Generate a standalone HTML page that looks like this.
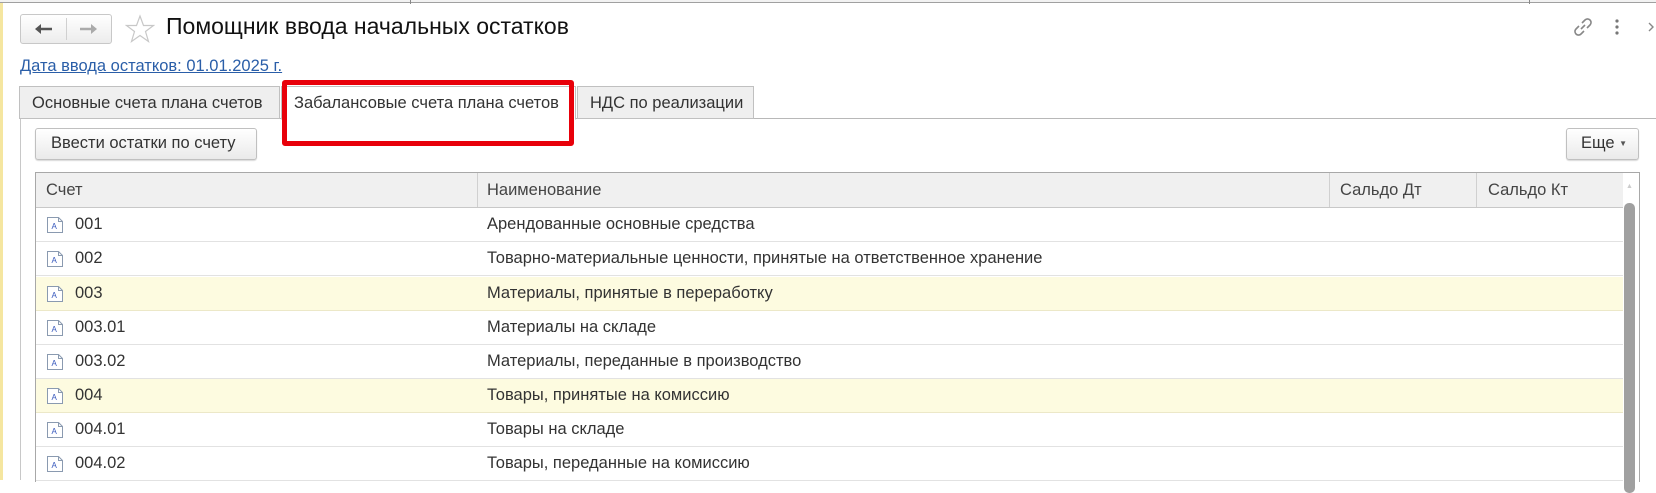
<!DOCTYPE html>
<html><head><meta charset="utf-8"><style>
*{box-sizing:border-box;margin:0;padding:0}
body{width:1656px;height:480px;overflow:hidden;background:#fff;font-family:"Liberation Sans",Arial,sans-serif;color:#333;position:relative;font-size:16.5px}
.a{position:absolute}
.topline{left:0;top:0;width:1656px;height:3px;background:#f2f2f2;border-bottom:1px solid #a0a0a0}
.ystrip{left:0;top:3px;width:3px;height:477px;background:#f5e6a0}
.nav{left:20px;top:14px;width:92px;height:30px;border:1px solid #c8c8c8;border-radius:3px;background:linear-gradient(#fff,#ececec)}
.nav .d{position:absolute;left:45px;top:3px;width:1px;height:22px;background:#d0d0d0}
.title{left:166px;top:13px;font-size:23px;color:#111}
.link{left:20px;top:57px;font-size:16.5px;color:#2a5ea8;text-decoration:underline}
.tab{top:86px;height:33px;border:1px solid #c0c0c0;background:#efefef;padding:7px 12px;font-size:16.5px;color:#333;white-space:nowrap}
.panelline{left:20px;top:118px;width:1636px;height:1px;background:#b8b8b8}
.panelv{left:20px;top:118px;width:1px;height:362px;background:#c8c8c8}
.btn{top:128px;height:32px;border:1px solid #c0c0c0;border-radius:3px;background:linear-gradient(#fff,#eaeaea);font-size:16.5px;color:#333;padding:5px 15px;box-shadow:0 1px 1px rgba(0,0,0,.15);white-space:nowrap}
.tbl{left:35px;top:172px;width:1605px;height:310px;border:1px solid #a8a8a8;border-bottom:none}
.hdr{left:0;top:0;width:1587px;height:35px;background:#f0f0f0;border-bottom:1px solid #c8c8c8}
.hc{top:0;height:34px;line-height:34px;color:#444;font-size:16.5px}
.vl{top:0;width:1px;height:34px;background:#d0d0d0}
.row{left:0;width:1587px;height:34px;border-bottom:1px solid #e2e2e2;line-height:33px}
.row.y{background:#fdfbe0;border-bottom-color:#ece8c8}
.ic{position:absolute;left:10px;top:8px}
.c1{position:absolute;left:39px}
.c2{position:absolute;left:451px}
.sb{left:1588px;top:30px;width:11px;height:290px;background:#a0a0a0;border-radius:5px}
</style></head><body>
<div class="a topline"></div>
<div class="a" style="left:410px;top:0;width:1px;height:4px;background:#888"></div>
<div class="a" style="left:1529px;top:0;width:1px;height:4px;background:#888"></div>
<div class="a ystrip"></div>
<div class="a nav"><div class="d"></div>
<svg class="a" style="left:13px;top:8px" width="20" height="12"><path d="M3 6H18" stroke="#555" stroke-width="2.5"/><path d="M1 6L7 1V11Z" fill="#555"/></svg>
<svg class="a" style="left:57px;top:8px" width="20" height="12"><path d="M2 6H17" stroke="#aaa" stroke-width="2.5"/><path d="M19 6L13 1V11Z" fill="#aaa"/></svg>
</div>
<svg class="a" style="left:125px;top:14px" width="30" height="30"><path d="M15 2L18.5 11.5H28.5L20.5 17.5L23.5 27.5L15 21.5L6.5 27.5L9.5 17.5L1.5 11.5H11.5Z" fill="none" stroke="#c8c8c8" stroke-width="1.2"/></svg>
<div class="a title">Помощник ввода начальных остатков</div>
<svg class="a" style="left:1572px;top:16px" width="22" height="22"><g fill="none" stroke="#888" stroke-width="1.6"><path d="M9 13L13 9"/><path d="M10 7L13 4a3 3 0 0 1 5 5l-3 3"/><path d="M12 15l-3 3a3 3 0 0 1-5-5l3-3"/></g></svg>
<svg class="a" style="left:1614px;top:18px" width="6" height="18"><circle cx="3" cy="3" r="1.6" fill="#777"/><circle cx="3" cy="9" r="1.6" fill="#777"/><circle cx="3" cy="15" r="1.6" fill="#777"/></svg>
<svg class="a" style="left:1648px;top:22px" width="8" height="10"><path d="M1 1L5 5L1 9" fill="none" stroke="#888" stroke-width="1.4"/></svg>
<div class="a link">Дата ввода остатков: 01.01.2025 г.</div>
<div class="a panelline"></div>
<div class="a panelv"></div>
<div class="a tab" style="left:19px;width:261px;">Основные счета плана счетов</div>
<div class="a tab" style="left:281px;width:295px;background:#fff;border-bottom-color:#fff;height:34px;padding-left:12px">Забалансовые счета плана счетов</div>
<div class="a tab" style="left:577px;width:177px;">НДС по реализации</div>
<div class="a" style="left:282px;top:80px;width:292px;height:66px;border:5px solid #e8000a;border-radius:3px"></div>
<div class="a btn" style="left:35px;width:222px">Ввести остатки по счету</div>
<div class="a btn" style="left:1566px;width:73px;padding-left:14px">Еще <span style="font-size:8px;color:#555;vertical-align:2px">▼</span></div>
<div class="a tbl">
<div class="a hdr">
<div class="a hc" style="left:10px">Счет</div>
<div class="a vl" style="left:441px"></div>
<div class="a hc" style="left:451px">Наименование</div>
<div class="a vl" style="left:1293px"></div>
<div class="a hc" style="left:1304px">Сальдо Дт</div>
<div class="a vl" style="left:1440px"></div>
<div class="a hc" style="left:1452px">Сальдо Кт</div>
</div>
<div class="a" style="left:1590px;top:10px;font-size:7px;color:#ccc">▲</div>
<div class="a sb"></div>
<div class="a row" style="top:35px"><svg class="ic" width="18" height="18"><path d="M1.5 1.5H12.5L16.5 5.5V16.5H1.5Z" fill="#fff" stroke="#8a9ab0"/><path d="M12.5 1.5V5.5H16.5" fill="none" stroke="#8a9ab0"/><text x="5.5" y="13" font-size="8" fill="#3355bb" font-family="Liberation Sans">A</text></svg><span class="c1">001</span><span class="c2">Арендованные основные средства</span></div>
<div class="a row" style="top:69px"><svg class="ic" width="18" height="18"><path d="M1.5 1.5H12.5L16.5 5.5V16.5H1.5Z" fill="#fff" stroke="#8a9ab0"/><path d="M12.5 1.5V5.5H16.5" fill="none" stroke="#8a9ab0"/><text x="5.5" y="13" font-size="8" fill="#3355bb" font-family="Liberation Sans">A</text></svg><span class="c1">002</span><span class="c2">Товарно-материальные ценности, принятые на ответственное хранение</span></div>
<div class="a row y" style="top:104px"><svg class="ic" width="18" height="18"><path d="M1.5 1.5H12.5L16.5 5.5V16.5H1.5Z" fill="#fff" stroke="#8a9ab0"/><path d="M12.5 1.5V5.5H16.5" fill="none" stroke="#8a9ab0"/><text x="5.5" y="13" font-size="8" fill="#3355bb" font-family="Liberation Sans">A</text></svg><span class="c1">003</span><span class="c2">Материалы, принятые в переработку</span></div>
<div class="a row" style="top:138px"><svg class="ic" width="18" height="18"><path d="M1.5 1.5H12.5L16.5 5.5V16.5H1.5Z" fill="#fff" stroke="#8a9ab0"/><path d="M12.5 1.5V5.5H16.5" fill="none" stroke="#8a9ab0"/><text x="5.5" y="13" font-size="8" fill="#3355bb" font-family="Liberation Sans">A</text></svg><span class="c1">003.01</span><span class="c2">Материалы на складе</span></div>
<div class="a row" style="top:172px"><svg class="ic" width="18" height="18"><path d="M1.5 1.5H12.5L16.5 5.5V16.5H1.5Z" fill="#fff" stroke="#8a9ab0"/><path d="M12.5 1.5V5.5H16.5" fill="none" stroke="#8a9ab0"/><text x="5.5" y="13" font-size="8" fill="#3355bb" font-family="Liberation Sans">A</text></svg><span class="c1">003.02</span><span class="c2">Материалы, переданные в производство</span></div>
<div class="a row y" style="top:206px"><svg class="ic" width="18" height="18"><path d="M1.5 1.5H12.5L16.5 5.5V16.5H1.5Z" fill="#fff" stroke="#8a9ab0"/><path d="M12.5 1.5V5.5H16.5" fill="none" stroke="#8a9ab0"/><text x="5.5" y="13" font-size="8" fill="#3355bb" font-family="Liberation Sans">A</text></svg><span class="c1">004</span><span class="c2">Товары, принятые на комиссию</span></div>
<div class="a row" style="top:240px"><svg class="ic" width="18" height="18"><path d="M1.5 1.5H12.5L16.5 5.5V16.5H1.5Z" fill="#fff" stroke="#8a9ab0"/><path d="M12.5 1.5V5.5H16.5" fill="none" stroke="#8a9ab0"/><text x="5.5" y="13" font-size="8" fill="#3355bb" font-family="Liberation Sans">A</text></svg><span class="c1">004.01</span><span class="c2">Товары на складе</span></div>
<div class="a row" style="top:274px"><svg class="ic" width="18" height="18"><path d="M1.5 1.5H12.5L16.5 5.5V16.5H1.5Z" fill="#fff" stroke="#8a9ab0"/><path d="M12.5 1.5V5.5H16.5" fill="none" stroke="#8a9ab0"/><text x="5.5" y="13" font-size="8" fill="#3355bb" font-family="Liberation Sans">A</text></svg><span class="c1">004.02</span><span class="c2">Товары, переданные на комиссию</span></div>
</div>
</body></html>
